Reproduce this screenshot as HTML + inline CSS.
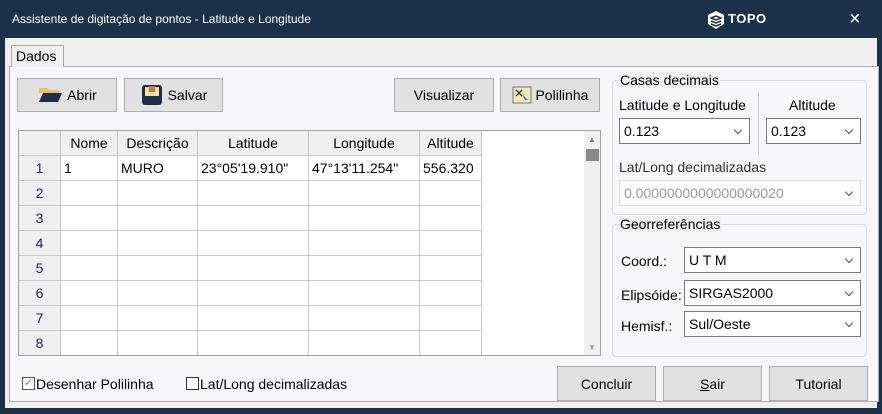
<!DOCTYPE html>
<html><head><meta charset="utf-8"><style>
*{box-sizing:border-box;margin:0;padding:0}
body{width:882px;height:414px;background:#1b3049;font-family:"Liberation Sans",sans-serif;font-size:14px;color:#000;position:relative;overflow:hidden}
.a{position:absolute}
.win{left:5px;top:38px;width:872px;height:370px;background:#f0f0f0}
.btn{position:absolute;background:#e1e1e1;border:1px solid #adadad;display:flex;align-items:center;justify-content:center;font-size:14px}
.grp{position:absolute;border:1px solid #dcdcdc;border-radius:4px}
.lg{position:absolute;top:-9px;left:6px;background:#f0f0f0;padding:0 1px;font-size:14px}
.cb{position:absolute;background:#fff;border:1px solid #7a7a7a;height:26px;font-size:14px;padding:4px 4px}
.cb:after{content:"";position:absolute;right:8px;top:8px;width:5px;height:5px;border-right:1px solid #555;border-bottom:1px solid #555;transform:rotate(45deg)}
table{border-collapse:collapse;font-size:14px}
td{border:1px solid #c8c8c8;height:25px;padding:0 3px;background:#fff}
td.h{background:#f0f0f0;text-align:center}
td.r{background:#f0f0f0;text-align:center;color:#1a1aa8}
</style></head><body>
<div class="a" style="left:12px;top:12px;color:#fff;font-size:12px">Assistente de digitação de pontos - Latitude e Longitude</div>
<svg class="a" style="left:706px;top:10px" width="20" height="20" viewBox="0 0 20 20"><path d="M10 1 L18 5 V14 L10 19 L2 14 V5 Z" fill="#fff"/><path d="M5 8 L10 6 L15 8 L10 10 Z M5 11 L10 13 L15 11 M5 14 L10 16 L15 14" stroke="#1b3049" stroke-width="1.5" fill="none"/></svg>
<div class="a" style="left:728px;top:11px;color:#fff;font-weight:bold;font-size:13px;letter-spacing:0.5px">TOPO</div>
<div class="a" style="left:849px;top:8px;color:#fff;font-size:20px;font-weight:300">×</div>
<div class="a win"></div>
<div class="a" style="left:11px;top:45px;width:53px;height:22px;background:#f0f0f0;border:1px solid #adadad;border-bottom:none;padding:2px 4px;font-size:14px;z-index:2">Dados</div>
<div class="a" style="left:9px;top:66px;width:870px;height:336px;background:#f7f7fa;border:1px solid #b0b0b0"></div>
<div class="btn" style="left:17px;top:78px;width:100px;height:34px"><svg width="26" height="20" viewBox="0 0 26 20"><path d="M2 3h8l2 2h10v3H2z" fill="#e8c060"/><path d="M2 17L6 8h19l-4 9z" fill="#1b3049"/></svg>&nbsp;Abrir</div>
<div class="btn" style="left:124px;top:78px;width:99px;height:34px"><svg width="24" height="24" viewBox="0 0 24 24"><rect x="2" y="2" width="20" height="20" rx="3" fill="#1b3049"/><rect x="5" y="4" width="14" height="9" fill="#f3e1a0"/><rect x="9" y="3" width="6" height="6" fill="#e06840"/></svg>&nbsp;Salvar</div>
<div class="btn" style="left:394px;top:78px;width:100px;height:34px">Visualizar</div>
<div class="btn" style="left:500px;top:78px;width:100px;height:34px"><svg width="20" height="18" viewBox="0 0 20 18"><rect x="1" y="1" width="18" height="16" fill="#f3e6b8" stroke="#777"/><path d="M4 4l6 6M10 4l-6 6" stroke="#333" stroke-width="1.3"/><path d="M10 8l6 6-3 0z" fill="#3a70c0"/></svg>&nbsp;Polilinha</div>
<div class="a" style="left:18px;top:130px;width:583px;height:226px;background:#fff;border:1px solid #a0a0a0;overflow:hidden">
<table style="position:absolute;left:-1px;top:-1px">
<tr><td class="h" style="width:42px"></td><td class="h" style="width:57px">Nome</td><td class="h" style="width:80px">Descrição</td><td class="h" style="width:111px">Latitude</td><td class="h" style="width:111px">Longitude</td><td class="h" style="width:62px">Altitude</td></tr>
<tr><td class="r">1</td><td>1</td><td>MURO</td><td>23°05'19.910"</td><td>47°13'11.254"</td><td>556.320</td></tr>
<tr><td class="r">2</td><td></td><td></td><td></td><td></td><td></td></tr>
<tr><td class="r">3</td><td></td><td></td><td></td><td></td><td></td></tr>
<tr><td class="r">4</td><td></td><td></td><td></td><td></td><td></td></tr>
<tr><td class="r">5</td><td></td><td></td><td></td><td></td><td></td></tr>
<tr><td class="r">6</td><td></td><td></td><td></td><td></td><td></td></tr>
<tr><td class="r">7</td><td></td><td></td><td></td><td></td><td></td></tr>
<tr><td class="r">8</td><td></td><td></td><td></td><td></td><td></td></tr>
<tr><td class="r">9</td><td></td><td></td><td></td><td></td><td></td></tr>
</table>
<div class="a" style="left:565px;top:0;width:17px;height:226px;background:#f0f0f0"><div class="a" style="left:4px;top:4px;color:#777;font-size:8px">▲</div><div class="a" style="left:2px;top:18px;width:13px;height:12px;background:#888"></div><div class="a" style="left:4px;top:212px;color:#999;font-size:8px">▼</div></div>
</div>
<div class="grp" style="left:612px;top:80px;width:255px;height:135px"><div class="lg">Casas decimais</div></div>
<div class="a" style="left:619px;top:97px">Latitude e Longitude</div>
<div class="a" style="left:758px;top:92px;width:1px;height:62px;background:#ccc"></div>
<div class="a" style="left:789px;top:97px">Altitude</div>
<div class="cb" style="left:619px;top:118px;width:131px">0.123</div>
<div class="cb" style="left:766px;top:118px;width:95px">0.123</div>
<div class="a" style="left:619px;top:159px;color:#333">Lat/Long decimalizadas</div>
<div class="cb" style="left:619px;top:180px;width:242px;border-color:#ddd;color:#999">0.0000000000000000020</div>
<div class="grp" style="left:612px;top:224px;width:255px;height:133px"><div class="lg">Georreferências</div></div>
<div class="a" style="left:621px;top:253px">Coord.:</div>
<div class="a" style="left:621px;top:287px">Elipsóide:</div>
<div class="a" style="left:621px;top:318px">Hemisf.:</div>
<div class="cb" style="left:684px;top:247px;width:177px">U T M</div>
<div class="cb" style="left:684px;top:280px;width:177px">SIRGAS2000</div>
<div class="cb" style="left:684px;top:311px;width:177px">Sul/Oeste</div>
<div class="a" style="left:22px;top:377px;width:13px;height:13px;border:1px solid #555;background:#fff;color:#d07030;font-size:11px;line-height:11px;text-align:center">✓</div>
<div class="a" style="left:36px;top:376px">Desenhar Polilinha</div>
<div class="a" style="left:186px;top:377px;width:13px;height:13px;border:1px solid #333;background:#fff"></div>
<div class="a" style="left:200px;top:376px">Lat/Long decimalizadas</div>
<div class="btn" style="left:557px;top:366px;width:99px;height:35px">Concluir</div>
<div class="btn" style="left:663px;top:366px;width:99px;height:35px"><u>S</u>air</div>
<div class="btn" style="left:769px;top:366px;width:99px;height:35px">Tutorial</div>
</body></html>
